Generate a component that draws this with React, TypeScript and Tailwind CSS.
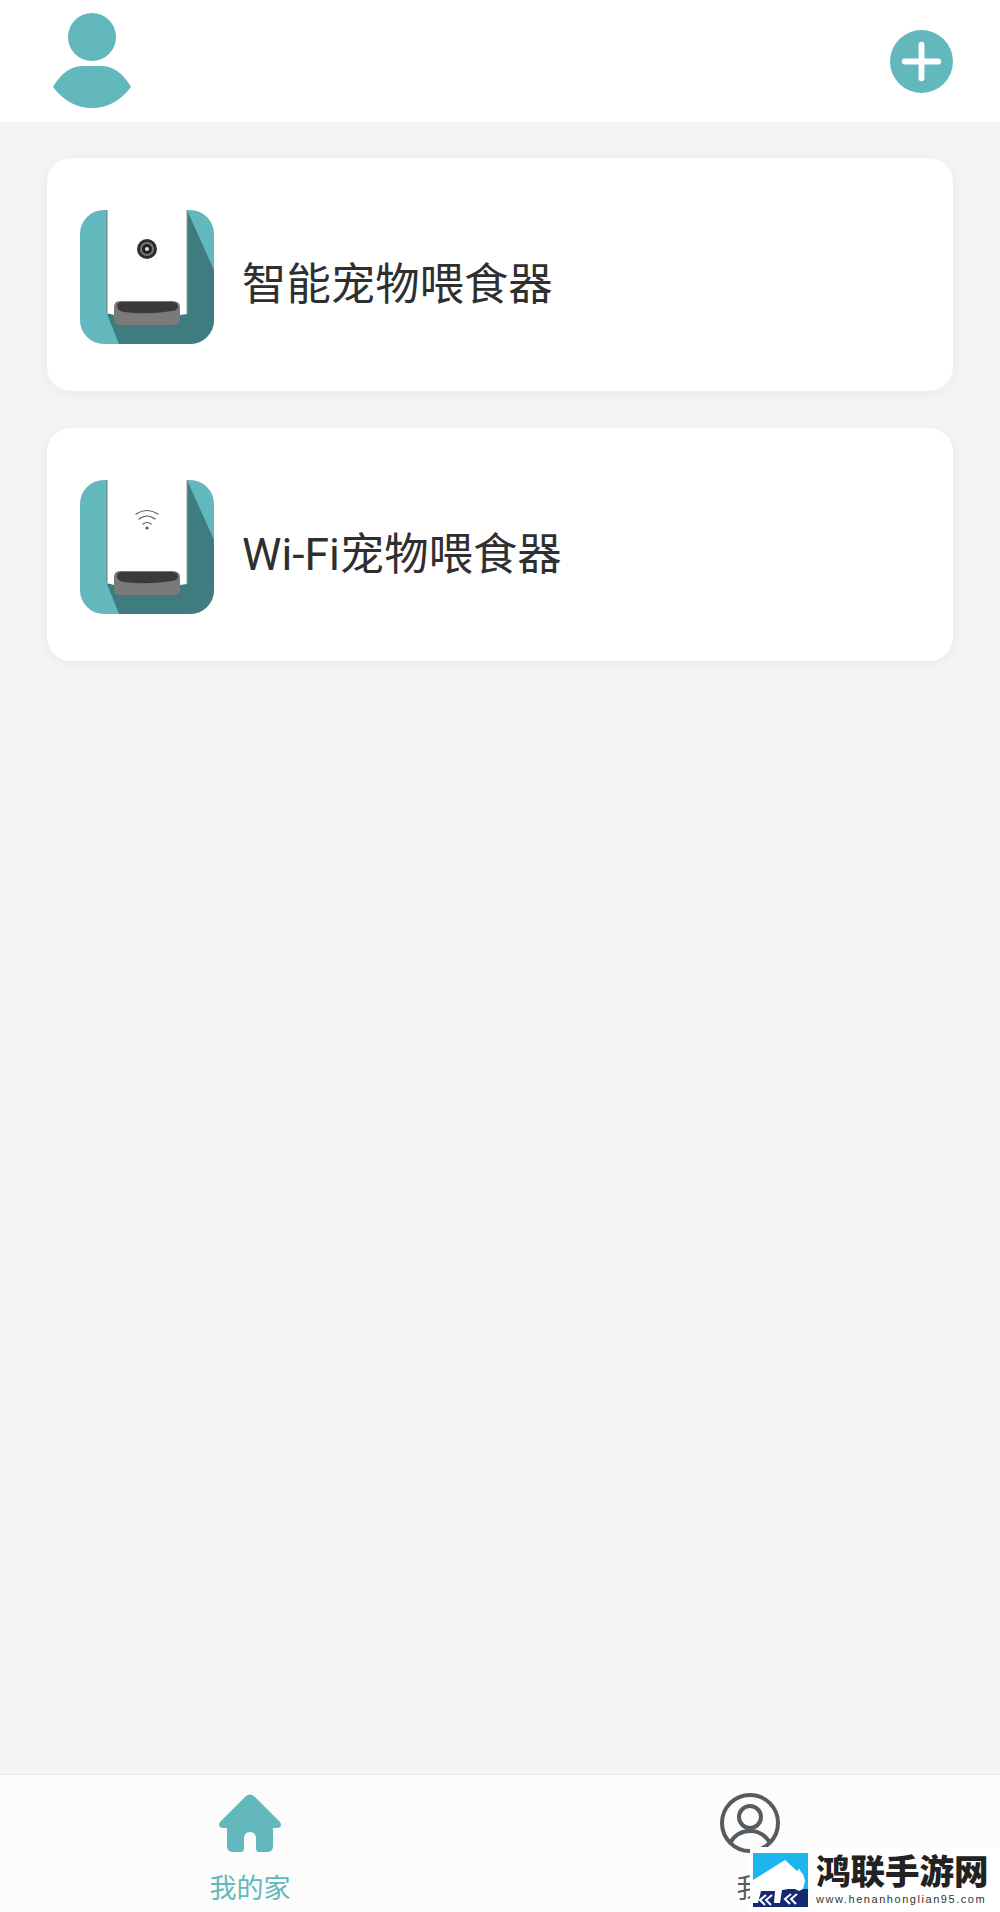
const TEAL = '#62b8bd';

function Feeder({ wifi }: { wifi?: boolean }) {
  const clip = wifi ? 'clipWifi' : 'clipCam';
  return (
    <svg width="134" height="134" viewBox="0 0 134 134" className="mt-[5px] shrink-0">
      <defs>
        <clipPath id={clip}>
          <rect width="134" height="134" rx="24" />
        </clipPath>
      </defs>
      <g clipPath={`url(#${clip})`}>
        <rect width="134" height="134" fill={TEAL} />
        <path d="M107 0L134 60V134H39L27 104L107 100Z" fill="#3f7c80" />
        <path d="M27 0H107V104L100 105H34L27 103Z" fill="#fff" />
        <path d="M27 0V103" stroke="#777" strokeWidth="1" fill="none" />
        <path d="M107 0V104" stroke="#999" strokeWidth="1" fill="none" />
      </g>
      <path d="M34 97Q34 91 40 91H92Q100 91 100 97V110Q100 115 92 115H42Q34 115 34 110Z" fill="#7a7a7a" />
      <path d="M37 96Q37 92 42 92H92Q98 92 98 97Q98 100 92 101Q67 105 44 102Q37 101 37 96Z" fill="#3a3a3a" />
      {wifi ? (
        <g fill="none" stroke="#555" strokeWidth="1.2" strokeLinecap="round">
          <path d="M56 34Q67 27 78 34" />
          <path d="M59 39Q67 33 75 39" />
          <path d="M63 44Q67 41 71 44" />
          <circle cx="67" cy="48" r="1" fill="#555" />
        </g>
      ) : (
        <g>
          <circle cx="67" cy="39" r="10" fill="#2c2c2c" />
          <circle cx="67" cy="39" r="7" fill="#777" />
          <circle cx="67" cy="39" r="5" fill="#222" />
          <circle cx="67" cy="39" r="2" fill="#ddd" />
        </g>
      )}
    </svg>
  );
}

function DeviceCard({ name, wifi }: { name: string; wifi?: boolean }) {
  return (
    <div className="flex h-[233px] items-center rounded-[24px] bg-white pl-[33px] pr-6 shadow-[0_2px_12px_rgba(0,0,0,0.05)]">
      <Feeder wifi={wifi} />
      <span className="ml-7 mt-[21px] text-[44.4px] leading-none text-[#2f2f2f]">{name}</span>
    </div>
  );
}

export default function App() {
  return (
    <div
      className="relative flex h-[1912px] w-[1000px] flex-col overflow-hidden bg-[#f4f4f4]"
      style={{ fontFamily: 'Roboto, "Noto Sans CJK SC", sans-serif' }}
    >
      {/* header */}
      <header className="flex h-[122px] items-center justify-between bg-white pl-[53px] pr-[47px]">
        <svg width="78" height="96" viewBox="0 0 78 96">
          <circle cx="39" cy="24" r="24" fill={TEAL} />
          <path d="M0 74Q12 53 30 53H48Q66 53 78 74Q62 95 39 95Q16 95 0 74Z" fill={TEAL} />
        </svg>
        <svg width="63" height="63" viewBox="0 0 64 64">
          <circle cx="32" cy="32" r="32" fill={TEAL} />
          <path d="M32 15V49M15 32H49" stroke="#fff" strokeWidth="6" strokeLinecap="round" />
        </svg>
      </header>

      {/* devices */}
      <main className="flex flex-1 flex-col gap-[37px] px-[47px] pt-9">
        <DeviceCard name="智能宠物喂食器" />
        <DeviceCard name="Wi-Fi宠物喂食器" wifi />
      </main>

      {/* tab bar */}
      <nav className="flex h-[138px] border-t border-[#ececec] bg-[#fcfcfc]">
        <div className="flex w-1/2 flex-col items-center pt-[19px]">
          <svg width="64" height="58" viewBox="0 0 64 58">
            <path
              d="M28 2Q32 -1 36 2L62 28Q65 33 59 34H55V52Q55 58 49 58H41Q38 58 38 54V45Q38 38 32 38Q26 38 26 45V54Q26 58 23 58H15Q9 58 9 52V34H5Q-1 33 2 28Z"
              fill={TEAL}
            />
          </svg>
          <span className="mt-[19px] text-[27px] leading-[36px] text-[#62b8bd]">我的家</span>
        </div>
        <div className="flex w-1/2 flex-col items-center pt-[18px]">
          <svg width="60" height="60" viewBox="0 0 60 60" fill="none" stroke="#555b5e" strokeWidth="4">
            <circle cx="30" cy="30" r="28" />
            <circle cx="30" cy="24" r="11" />
            <path d="M10 50Q17 38 30 38Q43 38 50 50" />
          </svg>
          <span className="mt-[18px] text-[27px] leading-[36px] text-[#555b5e]">我</span>
        </div>
      </nav>

      {/* watermark over the corner */}
      <div className="absolute bottom-0 right-0 flex h-[65px] w-[250px] items-center bg-white">
        <svg width="55" height="54" viewBox="0 0 55 54" className="ml-[3px] shrink-0">
          <rect width="55" height="54" fill="#1cb5ee" />
          <rect y="36" width="55" height="18" fill="#14296f" />
          <path d="M0 27L32 7L44 18L47 15L50 21L52 28L50 36L46 38L42 36L36 36L29 37L27 50L21 50L22 38L8 38L5 50L0 50Z" fill="#fff" />
          <path d="M46 10Q45 17 50 21Q53 22 54 20Q49 18 46 10Z" fill="#1cb5ee" />
          <path d="M13 42L7 47L12 52M19 42L13 47L18 52M38 41L32 46L37 51M44 41L38 46L43 51" fill="none" stroke="#fff" strokeWidth="2" />
        </svg>
        <div className="ml-2 flex flex-col">
          <span className="text-[34.5px] font-black leading-[38px] text-[#222]">鸿联手游网</span>
          <span
            className="mt-[2px] whitespace-nowrap text-[11px] leading-[13px] tracking-[1.55px] text-[#333]"
            style={{ fontFamily: '"Liberation Sans", sans-serif' }}
          >
            www.henanhonglian95.com
          </span>
        </div>
      </div>
    </div>
  );
}
